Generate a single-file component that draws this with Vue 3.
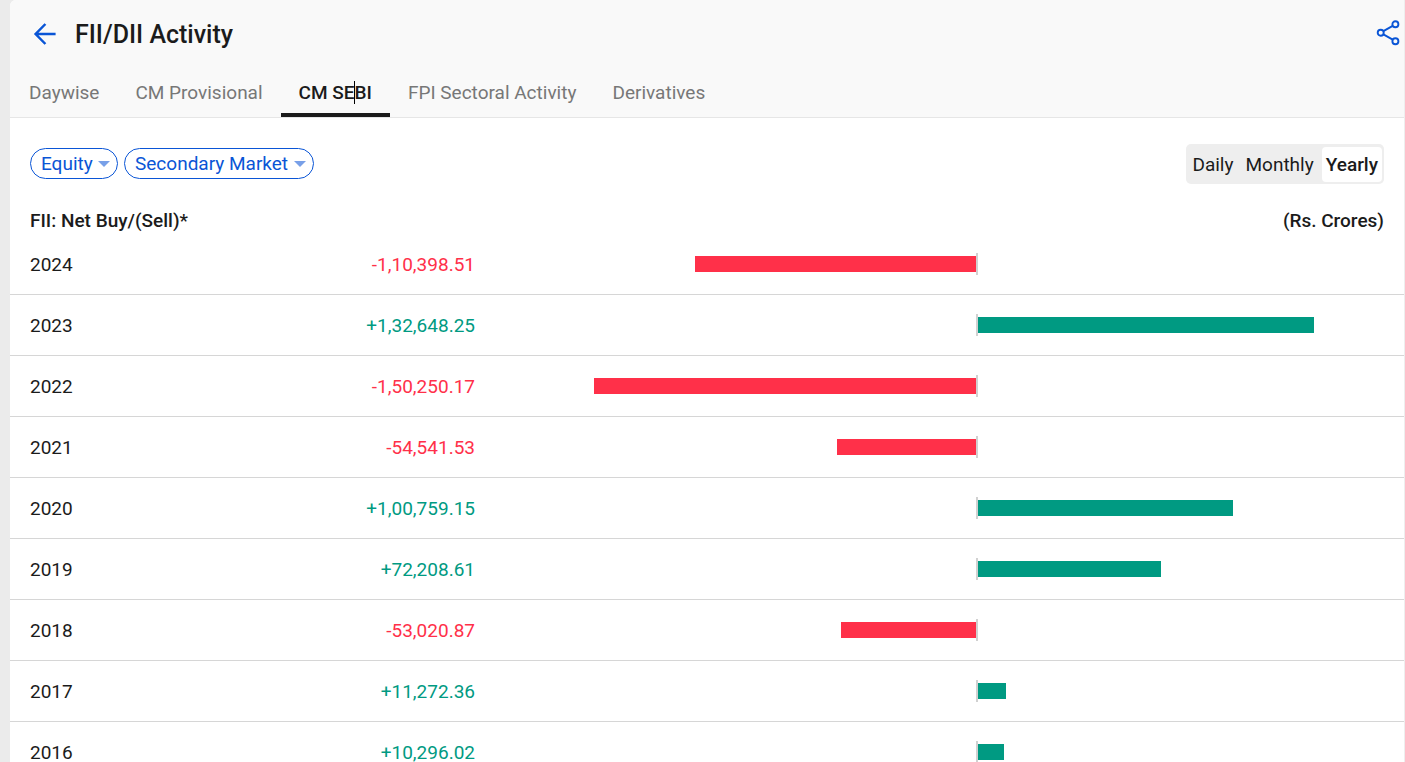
<script setup>
import { ref, computed } from 'vue'

const tabs = ['Daywise', 'CM Provisional', 'CM SEBI', 'FPI Sectoral Activity', 'Derivatives']
const activeTab = ref('CM SEBI')

const periods = ['Daily', 'Monthly', 'Yearly']
const activePeriod = ref('Yearly')

const segment = ref('Equity')
const market = ref('Secondary Market')

const rows = [
  { year: 2024, net: -110398.51 },
  { year: 2023, net: 132648.25 },
  { year: 2022, net: -150250.17 },
  { year: 2021, net: -54541.53 },
  { year: 2020, net: 100759.15 },
  { year: 2019, net: 72208.61 },
  { year: 2018, net: -53020.87 },
  { year: 2017, net: 11272.36 },
  { year: 2016, net: 10296.02 },
]

const largest = computed(() => Math.max(...rows.map((r) => Math.abs(r.net))))

function formatNet(net) {
  const digits = Math.abs(net).toLocaleString('en-IN', {
    minimumFractionDigits: 2,
    maximumFractionDigits: 2,
  })
  return (net < 0 ? '-' : '+') + digits
}

function barWidth(net) {
  return (Math.abs(net) / largest.value) * 100 + '%'
}
</script>

<template>
  <main class="page">
    <div class="card">
      <header class="head">
        <div class="title-bar">
          <button class="icon-button" type="button" aria-label="Back">
            <svg width="24" height="26" viewBox="0 0 24 26" fill="none" stroke="currentColor" stroke-width="2.5">
              <path d="M22.6 14H2.8M12.4 4L2.6 14L12.4 24" />
            </svg>
          </button>
          <h1 class="title">FII/DII Activity</h1>
          <button class="icon-button share" type="button" aria-label="Share">
            <svg width="26" height="26" viewBox="0 0 26 26" fill="none" stroke="currentColor" stroke-width="1.9">
              <circle cx="5.7" cy="12.8" r="3" />
              <circle cx="20.4" cy="4.3" r="3" />
              <circle cx="20.4" cy="21.2" r="3" />
              <path d="M8.4 11.2L17.7 5.9M8.4 14.4L17.7 19.6" />
            </svg>
          </button>
        </div>
        <nav class="tabs">
          <button
            v-for="tab in tabs"
            :key="tab"
            type="button"
            class="tab"
            :class="{ active: tab === activeTab }"
            @click="activeTab = tab"
          >{{ tab }}<span v-if="tab === activeTab" class="text-cursor"></span></button>
        </nav>
      </header>

      <section class="filters">
        <div class="chips">
          <span class="chip">
            <select v-model="segment" class="chip-select" aria-label="Segment">
              <option>Equity</option>
            </select>
            <span class="caret"></span>
          </span>
          <span class="chip">
            <select v-model="market" class="chip-select" aria-label="Market">
              <option>Secondary Market</option>
            </select>
            <span class="caret"></span>
          </span>
        </div>
        <div class="periods">
          <button
            v-for="period in periods"
            :key="period"
            type="button"
            class="period"
            :class="{ active: period === activePeriod }"
            :aria-pressed="period === activePeriod"
            @click="activePeriod = period"
          >{{ period }}</button>
        </div>
      </section>

      <table class="activity">
        <colgroup>
          <col class="col-year" />
          <col class="col-net" />
          <col />
        </colgroup>
        <thead>
          <tr>
            <th colspan="2" class="name">FII: Net Buy/(Sell)*</th>
            <th class="unit">(Rs. Crores)</th>
          </tr>
        </thead>
        <tbody>
          <tr v-for="row in rows" :key="row.year">
            <td class="year">{{ row.year }}</td>
            <td class="net" :class="row.net < 0 ? 'sell' : 'buy'">{{ formatNet(row.net) }}</td>
            <td class="chart">
              <div class="track">
                <div class="half left">
                  <div v-if="row.net < 0" class="bar bar-sell" :style="{ width: barWidth(row.net) }"></div>
                </div>
                <div class="axis"></div>
                <div class="half">
                  <div v-if="row.net > 0" class="bar bar-buy" :style="{ width: barWidth(row.net) }"></div>
                </div>
              </div>
            </td>
          </tr>
        </tbody>
      </table>
    </div>
  </main>
</template>

<style>
body {
  margin: 0;
  background: #ebebeb;
}
</style>

<style scoped>
.page {
  box-sizing: border-box;
  height: 100vh;
  overflow: hidden;
  padding-left: 10px;
  background: #ebebeb;
  color: #1b1b1b;
  font-family: Roboto, "Liberation Sans", sans-serif;
  font-size: 19px;
  line-height: 24px;
}

button,
select {
  margin: 0;
  border: 0;
  background: none;
  color: inherit;
  font: inherit;
  cursor: pointer;
}

.card {
  min-height: 100%;
  border-right: 1px solid #eeeeee;
  border-top-left-radius: 6px;
  background: #ffffff;
  overflow: hidden;
}

.head {
  border-bottom: 1px solid #e6e6e6;
  background: #f9f9f9;
}

.title-bar {
  display: flex;
  align-items: center;
  height: 66px;
  padding: 0 3px 0 23px;
}

.icon-button {
  display: flex;
  padding: 0;
  color: #0a55d6;
}

.share {
  margin-left: auto;
}

.title {
  margin: 0 0 0 18px;
  padding-top: 4px;
  font-size: 25px;
  line-height: 32px;
  font-weight: 500;
}

.tabs {
  display: flex;
  height: 51px;
  padding-left: 1px;
}

.tab {
  position: relative;
  padding: 7px 18px 0;
  border-bottom: 4px solid transparent;
  color: #777777;
  white-space: nowrap;
}

.tab.active {
  border-bottom-color: #1b1b1b;
  color: #1b1b1b;
  font-weight: 500;
}

.text-cursor {
  position: absolute;
  top: 15px;
  right: 35px;
  width: 1px;
  height: 23px;
  background: #000000;
}

.filters {
  display: flex;
  align-items: flex-end;
  justify-content: space-between;
  padding: 26px 20px 0;
}

.chips {
  display: flex;
  gap: 6px;
  padding-bottom: 5px;
}

.chip {
  position: relative;
  display: flex;
}

.chip-select {
  box-sizing: border-box;
  height: 31px;
  padding: 0 24px 0 10px;
  border: 1px solid #0a55d6;
  border-radius: 16px;
  appearance: none;
  color: #0a55d6;
}

.caret {
  position: absolute;
  top: 13px;
  right: 8px;
  width: 12px;
  height: 6px;
  background: #78a0e8;
  clip-path: polygon(0 0, 100% 0, 50% 100%);
  pointer-events: none;
}

.periods {
  display: flex;
  gap: 4px;
  padding: 3px 2px 2px;
  border-radius: 5px;
  background: #eeeeee;
}

.period {
  height: 35px;
  padding: 0 4px;
  border-radius: 4px;
}

.period.active {
  background: #ffffff;
  font-weight: 500;
}

.activity {
  width: 100%;
  border-collapse: separate;
  border-spacing: 0;
  table-layout: fixed;
}

.col-year {
  width: 10%;
}

.col-net {
  width: 23.36%;
}

th {
  height: 50px;
  padding: 24px 20px 0;
  box-sizing: border-box;
  line-height: 26px;
  font-weight: 500;
}

.name {
  text-align: left;
}

.unit {
  text-align: right;
}

td {
  box-sizing: border-box;
  height: 61px;
  padding: 2px 0 0;
  border-bottom: 1px solid #d6d6d6;
}

.year {
  padding-left: 20px;
}

.net {
  text-align: right;
}

.sell {
  color: #ff3049;
}

.buy {
  color: #009a82;
}

.chart {
  padding: 0 45px 0 119px;
}

.track {
  display: flex;
  align-items: center;
}

.half {
  display: flex;
  flex: 1;
}

.left {
  justify-content: flex-end;
}

.axis {
  width: 2px;
  height: 22px;
  background: #d1d1d1;
}

.bar {
  height: 16px;
}

.bar-sell {
  background: #ff3049;
}

.bar-buy {
  background: #009a82;
}
</style>
